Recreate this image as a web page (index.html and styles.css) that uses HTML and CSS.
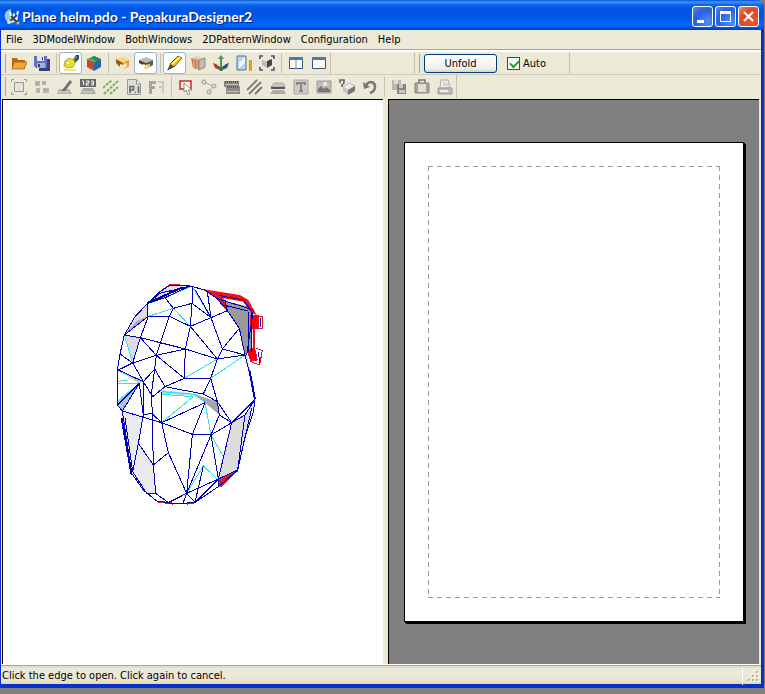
FILE: index.html
```html
<!DOCTYPE html>
<html lang="en">
<head>
    <meta charset="UTF-8">
    <meta name="viewport" content="width=device-width, initial-scale=1.0">
    <title>Plane helm.pdo - PepakuraDesigner2</title>
    <link rel="stylesheet" href="styles.css">
</head>
<body>
    <div class="window">
        <header class="titlebar">
            <svg class="app-icon" viewBox="0 0 16 16">
                <path d="M7 0a7 7 0 1 0 7 10A8 8 0 0 1 7 0z" fill="#8ecbf5"/>
                <path d="M6 3l2 8 2-5 2 5 2-9" fill="none" stroke="#fff" stroke-width="2"/>
                <path d="M5 13l8-7M7 7l7 7" stroke="#38414f" stroke-width="2"/>
                <circle cx="5" cy="13" r="2" fill="#e5e2cf"/>
                <circle cx="14" cy="14" r="1.5" fill="#d9b04c"/>
            </svg>
            <h1>Plane helm.pdo - PepakuraDesigner2</h1>
            <div class="window-buttons">
                <button class="win-btn" aria-label="Minimize"><svg viewBox="0 0 19 19"><path d="M4 13h7v3H4z" fill="#fff"/></svg></button>
                <button class="win-btn" aria-label="Maximize"><svg viewBox="0 0 19 19"><path d="M4 4h11v11H4zM5 7v7h9V7z" fill="#fff" fill-rule="evenodd"/></svg></button>
                <button class="win-btn close" aria-label="Close"><svg viewBox="0 0 19 19"><path d="M5 5l9 9M14 5l-9 9" stroke="#fff" stroke-width="2.2"/></svg></button>
            </div>
        </header>

        <nav class="menubar">
            <button>File</button>
            <button>3DModelWindow</button>
            <button>BothWindows</button>
            <button>2DPatternWindow</button>
            <button>Configuration</button>
            <button>Help</button>
        </nav>

        <div class="toolbars">
            <div class="row">
                <div class="toolbar">
                    <button class="tool" aria-label="Open"><svg viewBox="0 0 16 16"><path d="M1 3h5l1 2h7v9H1z" fill="#b86a10"/><path d="M3 7h13l-3 7H1z" fill="#f0a63a" stroke="#a35c0c" stroke-width=".7"/></svg></button>
                    <button class="tool" aria-label="Save"><svg viewBox="0 0 16 16"><path d="M5 4h11v12H5z" fill="#383f80"/><path d="M0 1h13v12H2l-2-2z" fill="#6670c0"/><path d="M3 1h7v5H3z" fill="#dfe5f5"/><path d="M3 8h8v5H3z" fill="#a4b0dc"/><path d="M4 9h2v3H4zM8 2h1v3H8z" fill="#39418d"/></svg></button>
                    <span class="sep"></span>
                    <button class="tool on" aria-label="Light"><svg viewBox="0 0 16 16"><path d="M9 5l4-5h3v4l-4 4z" fill="#2c5060"/><path d="M9 5l4-4 1 1-4 4z" fill="#70afc3"/><path d="M2 6l4-3 5 2 1 3-2 4-5 1-4-2z" fill="#efe22a" stroke="#a99b16" stroke-width=".8"/><circle cx="5" cy="8" r="2" fill="#fffccc" stroke="#b3a51c" stroke-width=".6"/><path d="M1 15h12" stroke="#efe77a" stroke-width="2"/></svg></button>
                    <button class="tool" aria-label="Texture"><svg viewBox="0 0 16 16"><path d="M1 4l7-3 7 3-7 3z" fill="#3cb653"/><path d="M1 4l7 3v9l-7-4z" fill="#c9482b"/><path d="M8 7l7-3v8l-7 4z" fill="#2a65a7"/><path d="M8 1l7 3-4 2-6-3z" fill="#31834a"/></svg></button>
                    <span class="sep"></span>
                    <button class="tool" aria-label="Flip faces"><svg viewBox="0 0 16 16"><path d="M1 4l6-2 7 3-6 3z" fill="#f8d57d"/><path d="M1 4l7 4v2L5 9v3L3 10 1 8z" fill="#9b5a18"/><path d="M8 8l6-3v6l-4 3-2-1z" fill="#e99a22"/><path d="M8 9l4-1v4l-4 2z" fill="#fce3a4"/></svg></button>
                    <button class="tool on" aria-label="Show faces"><svg viewBox="0 0 16 16"><path d="M1 5l7-3 7 3-7 3z" fill="#bdbdb8"/><path d="M1 5l7 3v2L5 9v1L1 8z" fill="#4c4137"/><path d="M8 8l7-3v5l-7 4z" fill="#5f5d5a"/><path d="M7 10l5-1v2l-4 4-2-2z" fill="#f5cf86"/></svg></button>
                    <span class="sep"></span>
                    <button class="tool on" aria-label="Cut edge"><svg viewBox="0 0 16 16"><path d="M3 9l8-8 4 2-8 9z" fill="#f1c616" stroke="#6d5417"/><path d="M3 9l4 3-7 4z" fill="#4d4c4a"/><path d="M5 9l8-7" stroke="#fff392" stroke-width="1.5"/></svg></button>
                    <button class="tool" aria-label="Box"><svg viewBox="0 0 16 16"><path d="M1 3l6-2 8 2-6 3z" fill="#d9d6ce"/><path d="M1 3l8 2v10l-6-2z" fill="#c57b45"/><path d="M4 4v9M7 5v10" stroke="#eec6a2"/><path d="M9 5l6-2v9l-6 3z" fill="#bebeb6" stroke="#8d8e88"/></svg></button>
                    <button class="tool" aria-label="Axis"><svg viewBox="0 0 16 16"><path d="M8 4v10" stroke="#347348" stroke-width="1.6"/><path d="M5 4l3-4 3 4z" fill="#36a34d"/><path d="M0 8l3 1 4 3v3l-5-2z" fill="#bb3630"/><path d="M16 8l-3 1-4 3v3l5-2z" fill="#275784"/><path d="M5 12h6l-2 4H7z" fill="#297d42"/></svg></button>
                    <button class="tool" aria-label="Scale"><svg viewBox="0 0 16 16"><path d="M1 1h9v14H1z" fill="#b8d4e8" stroke="#60708a"/><path d="M3 8l6-6v6l-6 5z" fill="#eef8ff"/><path d="M13 5h3v11h-3z" fill="#e5a325"/><path d="M13 7h1M13 10h1M13 13h1" stroke="#9a640b"/></svg></button>
                    <button class="tool" aria-label="Fit model"><svg viewBox="0 0 16 16"><path d="M1 4V1h3M12 1h3v3M1 12v3h3M12 15h3v-3" fill="none" stroke="#465183" stroke-width="1.6"/><path d="M3 5l5-2 5 1-5 3z" fill="#e7e7e4"/><path d="M8 6l5-2v6l-5 3z" fill="#454545"/><path d="M3 5l5 2v6l-5-3z" fill="#bcbcb8"/></svg></button>
                    <span class="sep"></span>
                    <button class="tool" aria-label="Both windows"><svg viewBox="0 0 16 16"><path d="M1.500 2.500h13v11h-13z" fill="#fffbe5" stroke="#30558d"/><path d="M1 2h14v3H1z" fill="#4d78b6"/><path d="M8 5v9" stroke="#7f95b5"/></svg></button>
                    <button class="tool" aria-label="Single window"><svg viewBox="0 0 16 16"><path d="M1.500 2.500h13v11h-13z" fill="#fffbe5" stroke="#30558d"/><path d="M1 2h14v3H1z" fill="#4d78b6"/></svg></button>
                </div>
                <div class="toolbar blank"></div>
                <div class="toolbar unfold-bar">
                    <button class="unfold">Unfold</button>
                    <label class="auto"><input type="checkbox" checked>Auto</label>
                </div>
            </div>

            <div class="row">
                <div class="toolbar">
                    <button class="tool" aria-label="Select all"><svg viewBox="0 0 16 16"><path d="M3.500 3.500h9v9h-9z" fill="#e3e2dc" stroke="#999"/><path d="M.5 3V.5H3M13 .5h2.500V3M.5 13v2.500H3M13 15.500h2.500V13" fill="none" stroke="#999"/></svg></button>
                    <button class="tool" aria-label="Arrange parts"><svg viewBox="0 0 16 16"><path d="M1 2h5v5H1zM8 2h4v4H8zM2 9h4v5H2zM9 9h6v5H9z" fill="#b9b8b0"/><path d="M2 4h3M9 4h2M3 11h2M10 11h3" stroke="#999"/></svg></button>
                    <button class="tool" aria-label="Edit pen"><svg viewBox="0 0 16 16"><path d="M2 10h10l3 5H0z" fill="#b2b1aa"/><path d="M6 10l7-9 2 2-7 9-4 1z" fill="#6d6d6d"/><path d="M2 13h10" stroke="#ddd"/></svg></button>
                    <button class="tool" aria-label="Edge numbers"><svg viewBox="0 0 16 16"><path d="M0 0h16v8H0z" fill="#666"/><path d="M2 2h1.500v4M6 2h3v2H6v2h3M11 2h2.500v4H11M11 4h2" fill="none" stroke="#fff"/><path d="M3 9h10l3 6H0z" fill="#aaa9a2"/><path d="M2 13h11" stroke="#ddd"/></svg></button>
                    <button class="tool" aria-label="Fold lines"><svg viewBox="0 0 16 16"><path d="M0 9l9-8M1 15L15 2M7 15l8-7" stroke="#7faf63" stroke-width="2" stroke-dasharray="3 1"/></svg></button>
                    <button class="tool" aria-label="Page number"><svg viewBox="0 0 16 16"><path d="M1.500 .5h9l4 4v11h-13z" fill="#deded8" stroke="#999"/><path d="M10.500 1v4h4" fill="#fff" stroke="#888"/><path d="M4 14V7.500h3.500V11H4M9 13.500h1M12.500 7v7" fill="none" stroke="#666" stroke-width="1.600"/></svg></button>
                    <button class="tool" aria-label="Mirror"><svg viewBox="0 0 16 16"><path d="M0 2h7v3H3v2h3v3H3v5H0z" fill="#a6a59d"/><path d="M9 2h6v12h-2V9h-3V7h3V4H9z" fill="#cbcac1"/></svg></button>
                    <span class="sep"></span>
                    <button class="tool" aria-label="Select part"><svg viewBox="0 0 16 16"><path d="M2 2h11v8H2z" fill="#fff2ed" stroke="#c92832" stroke-width="1.5"/><path d="M6 4v9l2-2 2 5 2-1-2-4h4z" fill="#fff" stroke="#777" stroke-width=".8"/></svg></button>
                    <button class="tool" aria-label="Edit nodes"><svg viewBox="0 0 16 16"><path d="M3 3l9 4-4 7" fill="none" stroke="#aaa"/><g fill="#deddd5" stroke="#999"><circle cx="3" cy="3" r="2"/><circle cx="13" cy="7" r="2"/><circle cx="8" cy="13" r="2"/></g></svg></button>
                    <button class="tool" aria-label="Join edges"><svg viewBox="0 0 16 16"><path d="M0 2h15v5h1v8H2V8H0z" fill="#8d8c88"/><path d="M1 3h14M3 8h12" stroke="#555" stroke-width="2" stroke-dasharray="1 1"/><path d="M2 5.500h12M3 12.500h12" stroke="#c2c1bd"/></svg></button>
                    <button class="tool" aria-label="Edge colour"><svg viewBox="0 0 16 16"><path d="M0 11L10 1M2 15L14 3M8 15l7-7" stroke="#777" stroke-width="1.8"/></svg></button>
                    <button class="tool" aria-label="Flaps"><svg viewBox="0 0 16 16"><path d="M4 4h9l2 4H1z" fill="#c8c7c0" stroke="#999" stroke-width=".8"/><path d="M1 8h14v2H1z" fill="#555"/><path d="M3 11h11l2 4H0z" fill="#aaa"/></svg></button>
                    <button class="tool" aria-label="Text"><svg viewBox="0 0 16 16"><path d="M1 1h14v14H1z" fill="#cbcac4" stroke="#aaa"/><path d="M4 6V4h8v2M8 4v8M6 12h4" fill="none" stroke="#777" stroke-width="1.6"/></svg></button>
                    <button class="tool" aria-label="Image"><svg viewBox="0 0 16 16"><path d="M1 2h14v12H1z" fill="#bebdb7" stroke="#9c9b97"/><path d="M2 13v-3l3-3 3 3 2-2 4 3v2z" fill="#777"/><circle cx="9" cy="5" r="2" fill="#eee"/></svg></button>
                    <button class="tool" aria-label="Check part"><svg viewBox="0 0 16 16"><path d="M1 4V1h4v3L3 6v2" fill="none" stroke="#666" stroke-width="1.6"/><path d="M4 8l6-4 6 3-7 4z" fill="#eeede8" stroke="#999" stroke-width=".6"/><path d="M4 8l5 3v5l-5-4z" fill="#c4c3bd"/><path d="M9 11l7-4v5l-7 4z" fill="#777"/></svg></button>
                    <button class="tool" aria-label="Undo"><svg viewBox="0 0 16 16"><path d="M4 6c4-5 9-3 9 2 0 3-2 5-5 6" fill="none" stroke="#777" stroke-width="2.5"/><path d="M1 3l1 7 6-2z" fill="#777"/></svg></button>
                    <span class="sep"></span>
                    <button class="tool" aria-label="Copy"><svg viewBox="0 0 16 16"><path d="M1 1h9v10H1z" fill="#b8b7b1"/><path d="M3 1h4v4H3z" fill="#ddd"/><path d="M6 5h9v10H6z" fill="#858480"/><path d="M8 5h4v4H8zM8 11h6v3H8z" fill="#c8c7c1"/></svg></button>
                    <button class="tool" aria-label="Paste"><svg viewBox="0 0 16 16"><path d="M1 4h14v10H1z" fill="#a3a29d" stroke="#888"/><path d="M5 4V1h6v3" fill="none" stroke="#777" stroke-width="1.5"/><path d="M4 5h8v8H4z" fill="#dfded7"/></svg></button>
                    <button class="tool" aria-label="Print"><svg viewBox="0 0 16 16"><path d="M4 1h7l2 8H3z" fill="#eee" stroke="#aaa"/><path d="M1 9h14v6H1z" fill="#bdbcb6" stroke="#999"/><path d="M3 12h8" stroke="#eee" stroke-width="2"/><path d="M6 4h4M6 6h5" stroke="#bbb"/></svg></button>
                </div>
            </div>
        </div>

        <main class="panes">
            <section class="pane model">
                <svg class="helm" viewBox="9 -63 480 768" role="img" aria-label="3D model">
                    <!-- shaded faces -->
                    <path fill="#ddddf2" d="M112 86L150 50 180 31 225 35 165 68zM388 160L405 240 430 370 437 370 412 240zM365 443L405 420 435 373 383 585 325 612z"/>
                    <path fill="#dcdce6" d="M43 180L75 125 112 86 115 124zM43 180L91 188 68 264zM37 408L68 590 85 505z"/>
                    <path fill="#e9e9ee" d="M37 408L100 420 85 505 130 570 137 655 110 658 68 590z"/>
                    <path fill="#aaa9b0" d="M43 180L80 138 115 124z"/>
                    <path fill="#dcdcdc" d="M365 443L405 430 375 585 325 612z"/>
                    <path fill="#b8c4c4" d="M22 390L25 376 88 325 70 355 37 408zM25 285L100 320 85 323z"/>
                    <path fill="#a5dede" d="M155 345L265 357 290 385 250 362 155 356z"/>
                    <path fill="#9fa9a9" d="M250 356L322 380 328 420 285 383z"/>
                    <path fill="#999" d="M330 75L420 95 430 125 423 225 405 240 388 160 352 107z"/>
                    <path fill="#f01018" d="M275 42L390 60 415 75 440 120 425 115 400 80 340 70 356 115 320 70zM325 615L383 585 325 638z"/>
                    <!-- open edges -->
                    <g class="edge red">
                        <path class="thick" d="M433 120V230M145 680L190 686M230 686L255 682M383 585L330 635"/>
                        <path d="M150 50L180 28 240 32M405 485L383 585M140 678L195 687"/>
                        <path fill="#f00" d="M422 122h24v38h-24zM412 224l22-4 8 35-20 4z"/>
                        <path d="M446 125h12v34h-12M425 262l24 8 8-44-20-6"/>
                    </g>
                    <g class="edge cyan">
                        <path d="M115 124L190 100 241 154M43 180L68 264M223 310L322 252M302 310L405 240M250 40L303 128M120 84L165 68 240 36"/>
                        <path d="M25 287L100 318M22 325H85M25 376L90 325M22 320L50 315M155 350L255 358 285 383M155 443L285 383M155 443L250 365M155 358L250 365"/>
                        <path d="M285 383L303 480 340 545M230 655L280 573 325 615"/>
                    </g>
                    <g class="edge">
                        <path d="M22 390L22 285 30 237 43 180 75 125 112 86 150 50 180 31 240 33 285 45 320 70 352 107 388 160 405 240 420 300 435 373 430 410 405 485 383 585 325 635 255 682 195 687 140 678 100 645 65 595 37 408z"/>
                        <path class="thick" d="M112 84L150 68 215 38M418 285L435 373M35 430L65 600"/>
                        <path d="M112 86V124M112 86L165 68 190 100 246 85V33M112 86L150 55 240 33 165 68M180 50L240 33M246 85L241 154 303 128 246 85M256 45L303 128 292 50M303 128L352 107"/>
                        <path d="M115 124H178L241 154 226 222M241 154L322 252M178 124L190 100M178 124L139 241M43 180L115 124 91 188zM91 188L226 222 139 241zM226 222L322 252M91 188L68 264"/>
                        <path d="M303 128L337 222 388 160M337 222L322 252 405 240zM226 222L223 310 139 241 68 264 30 237M25 285L68 264 100 320M139 241L134 282 100 320M134 282L165 335 223 310H302L322 252"/>
                        <path d="M25 285L100 320 128 365 165 335 280 357 322 380 365 443M302 310L280 357M302 310L322 380M134 282L125 350 130 570M22 390L88 325 37 408M88 325L100 420V320"/>
                        <path d="M155 350V443L247 478 303 480 365 443 435 373M37 408L155 443M22 390L37 408M100 420L125 415 155 443M155 443L175 533 230 655 247 478 285 383M155 443L285 383"/>
                        <path d="M328 420L303 480 325 612 365 443 405 420 435 373M322 380L328 420 365 443M405 420L383 585 325 612 230 655 303 480M100 420L85 505 68 590M85 505L130 570 175 533M130 570L137 655H110L68 590"/>
                        <path d="M137 655L175 683 230 655 255 682 280 573M230 655L218 687M325 612V635M255 682L325 612M45 430L68 590M425 400L383 585"/>
                        <path d="M320 70L430 105 410 240M330 62L400 75 425 110M340 90L415 108M352 107L345 75M415 110V230M425 110V230M450 130V155M445 230L450 268"/>
                    </g>
                </svg>
            </section>
            <section class="pane pattern">
                <div class="paper"><div class="margin"></div></div>
            </section>
        </main>

        <footer class="statusbar">
            <span>Click the edge to open. Click again to cancel.</span>
            <svg class="grip" viewBox="0 0 18 18"><path fill="#fff" d="M14 5h2v2h-2zM10 9h2v2h-2zM14 9h2v2h-2zM6 13h2v2H6zM10 13h2v2h-2zM14 13h2v2h-2z"/><path fill="#b8b4a0" d="M13 4h2v2h-2zM9 8h2v2H9zM13 8h2v2h-2zM5 12h2v2H5zM9 12h2v2H9zM13 12h2v2h-2z"/></svg>
        </footer>
    </div>
</body>
</html>
```
FILE: styles.css
```css
* {
    box-sizing: border-box;
}
body {
    margin: 0;
    height: 100vh;
    padding: 0 1px 6px 0;
    background: #808080;
    font-family: Tahoma, "DejaVu Sans Condensed", sans-serif;
    font-size: 11px;
    color: #000;
    overflow: hidden;
}
button {
    font: inherit;
    color: inherit;
    margin: 0;
    padding: 0;
    border: none;
    background: none;
}
.window {
    height: 100%;
    display: flex;
    flex-direction: column;
    background: #ece9d8;
    border: solid #0831c8;
    border-width: 0 3px 4px 1px;
    border-radius: 0 7px 0 0;
}
.titlebar {
    height: 30px;
    flex: none;
    display: flex;
    align-items: center;
    gap: 2px;
    margin: 0 -3px 0 -1px;
    padding: 3px 5px 0 4px;
    border-radius: 0 7px 0 0;
    background: linear-gradient(#0a4fd0 0, #3d95ff 2px, #0863ee 5px, #0054e3 9px, #0058ea 18px, #0067ff 25px, #0050dc 28px, #003ab0 30px);
}
.app-icon {
    width: 16px;
    height: 16px;
}
.titlebar h1 {
    flex: 1;
    margin: 0;
    font-family: "Trebuchet MS", Lato, sans-serif;
    font-size: 14px;
    font-weight: bold;
    color: #fff;
    text-shadow: 1px 1px 1px #0a2070;
    white-space: nowrap;
}
.window-buttons {
    display: flex;
    gap: 2px;
}
.win-btn {
    width: 21px;
    height: 21px;
    border: 1px solid #fff;
    border-radius: 3px;
    background: radial-gradient(circle at 80% 80%, #4d8cff, #2a5fe0 60%, #5e88ea);
}
.win-btn.close {
    background: radial-gradient(circle at 80% 80%, #e8562c, #d9482a 60%, #ec9078);
}
.win-btn svg {
    display: block;
    width: 19px;
    height: 19px;
}
.menubar {
    height: 20px;
    flex: none;
    display: flex;
    border-bottom: 1px solid #aca899;
}
.menubar button {
    padding: 0 5px 1px;
}
.toolbars {
    flex: none;
    border-top: 2px solid #fff;
    padding-bottom: 1px;
}
.row {
    display: flex;
    height: 23px;
}
.row:first-child {
    border-bottom: 1px solid #d0ccba;
}
.toolbar {
    display: flex;
    align-items: center;
    padding-left: 6px;
    border-right: 1px solid #c5c1af;
    background: linear-gradient(#aca899, #aca899) 4px 2px / 1px 19px no-repeat;
}
.toolbar.blank {
    width: 84px;
    background: none;
}
.toolbar.unfold-bar {
    width: 155px;
    padding-left: 9px;
}
.tool {
    width: 23px;
    height: 22px;
    display: flex;
    align-items: center;
    justify-content: center;
}
.tool svg {
    width: 16px;
    height: 16px;
}
.tool.on {
    background: #fff;
    border: 1px solid #98b5d2;
    border-radius: 3px;
}
.sep {
    width: 6px;
    height: 20px;
    background: linear-gradient(#c5c1af, #c5c1af) 3px 0 / 1px 100% no-repeat;
}
.unfold {
    width: 73px;
    height: 19px;
    border: 1px solid #003c74;
    border-radius: 3px;
    background: linear-gradient(#fff, #f0f0ea 80%, #d6d0c5);
}
.auto {
    display: flex;
    align-items: center;
    gap: 3px;
    margin-left: 10px;
}
.auto input {
    appearance: none;
    width: 13px;
    height: 13px;
    margin: 0;
    border: 1px solid #1c5180;
    background: #f7f7f4;
}
.auto input:checked::before {
    content: "";
    display: block;
    width: 7px;
    height: 4px;
    margin: 2px;
    border: solid #21a121;
    border-width: 0 0 2px 2px;
    transform: rotate(-45deg);
}
.panes {
    flex: 1;
    min-height: 0;
    display: grid;
    grid-template-columns: 381fr 371fr;
    gap: 5px;
    padding: 0 2px 0 1px;
}
.pane {
    border-top: 1px solid #000;
    border-left: 1px solid #000;
    display: flex;
    min-width: 0;
}
.model {
    align-items: center;
    justify-content: center;
    background: #fff;
}
.helm {
    width: 160px;
    height: 256px;
}
.edge path {
    fill: none;
    stroke: #0000b4;
    stroke-width: 3;
    shape-rendering: crispEdges;
}
.edge.cyan path {
    stroke: #38e0ec;
}
.edge.red path {
    stroke: #e01030;
}
.edge.red path[fill] {
    fill: #f00;
}
.edge .thick {
    stroke-width: 6;
}
.pattern {
    padding: 42px 15px;
    background: #808080;
}
.paper {
    flex: 1;
    padding: 23px;
    border: 1px solid #000;
    background: #fff;
    box-shadow: 1px 1px #000, 2px 2px #000;
}
.margin {
    --dash: #999 0 5px, transparent 5px 9px;
    height: 100%;
    background:
        repeating-linear-gradient(90deg, var(--dash)) top / 100% 1px no-repeat,
        repeating-linear-gradient(90deg, var(--dash)) bottom / 100% 1px no-repeat,
        repeating-linear-gradient(var(--dash)) left / 1px 100% no-repeat,
        repeating-linear-gradient(var(--dash)) right / 1px 100% no-repeat;
}
.statusbar {
    height: 20px;
    flex: none;
    display: flex;
    align-items: center;
    justify-content: space-between;
    padding: 2px 0 0 1px;
    border-top: 1px solid #fff;
    background: linear-gradient(#aca899 1px, #dedac8 1px, #ece9d8 4px, #ece9d8 12px, #eadfb8 17px, #c8d8ee);
}
.grip {
    width: 19px;
    height: 18px;
    border-left: 1px solid #fff;
}
```
